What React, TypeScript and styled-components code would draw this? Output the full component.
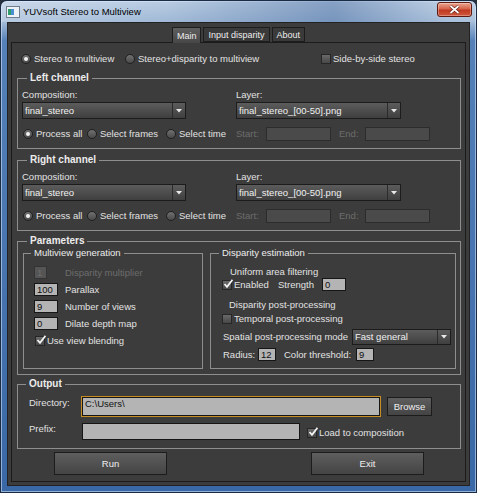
import React from 'react'
import styled, { createGlobalStyle } from 'styled-components'

const GlobalStyle = createGlobalStyle`
    html, body {
        margin: 0;
        padding: 0;
        background: #26313d;
    }
    body {
        font-family: "Liberation Sans", Arial, sans-serif;
        font-size: 9.5px;
        line-height: 12px;
        color: #e2e2e2;
    }
`

const Window = styled.div`
    box-sizing: border-box;
    width: 477px;
    height: 493px;
    display: flex;
    flex-direction: column;
    padding: 0 6px 6px;
    border: 1px solid #1a2c44;
    border-radius: 7px 7px 0 0;
    background: linear-gradient(to bottom, #b9cce2 0, #9fb8d6 22px, #5581b8 40px, #3a68a6 100%);
    box-shadow: inset 0 0 0 1px rgba(220, 235, 255, 0.55);
`

const TitleBar = styled.div`
    height: 21px;
    margin: 0 -6px;
    padding: 0 4px 0 5px;
    display: flex;
    align-items: center;
    gap: 3px;
    border-radius: 6px 6px 0 0;
    background: linear-gradient(to right, rgba(255,255,255,0.25) 0, rgba(255,255,255,0) 35%, rgba(40,80,140,0.35) 70%, rgba(255,255,255,0.1) 95%);
    color: #000;
`

const CloseButton = styled.div`
    box-sizing: border-box;
    width: 35px;
    height: 15px;
    margin-left: auto;
    align-self: flex-start;
    margin-top: 1px;
    display: flex;
    align-items: center;
    justify-content: center;
    border: 1px solid #5e1a10;
    border-radius: 3px;
    background: linear-gradient(#eaa590, #d6644a 45%, #c03a22 55%, #d0583c);
    box-shadow: inset 0 0 0 1px rgba(255,255,255,0.3);
`

const Client = styled.div`
    flex: 1;
    display: flex;
    flex-direction: column;
    background: #3c3c3c;
    border: 1px solid #222;
    padding: 4px 3px 3px;
`

const TabBar = styled.div`
    height: 15px;
    display: flex;
    justify-content: center;
    gap: 2px;
    align-items: flex-start;
`

const Tab = styled.div<{ $active?: boolean }>`
    box-sizing: border-box;
    height: ${p => p.$active ? 16 : 15}px;
    padding: 0 4px;
    display: flex;
    align-items: center;
    font-size: 9px;
    border: 1px solid #1d1d1d;
    border-bottom: ${p => p.$active ? 'none' : '1px solid #1d1d1d'};
    background: ${p => p.$active ? 'linear-gradient(#5e5e5e, #474747)' : '#3a3a3a'};
    color: #eee;
    position: relative;
    z-index: 1;
`

const Pane = styled.div`
    flex: 1;
    display: flex;
    flex-direction: column;
    border: 1px solid #1b1b1b;
    padding: 0 4px 0 5px;
`

const TopRow = styled.div`
    display: flex;
    align-items: center;
    height: 14px;
    margin: 9px 0 0 4px;
`

const Option = styled.label<{ $w?: number; $gap?: number }>`
    display: inline-flex;
    align-items: center;
    gap: ${p => p.$gap ?? 3}px;
    width: ${p => p.$w ? p.$w + 'px' : 'auto'};
    flex-shrink: 0;
    white-space: nowrap;
`

const Radio = styled.span<{ $on?: boolean }>`
    box-sizing: border-box;
    width: 10px;
    height: 10px;
    border-radius: 50%;
    border: 1px solid #202020;
    background: linear-gradient(#707070, #4a4a4a);
    display: inline-flex;
    align-items: center;
    justify-content: center;
    flex-shrink: 0;

    &::after {
        content: "";
        display: ${p => p.$on ? 'block' : 'none'};
        width: 4px;
        height: 4px;
        border-radius: 50%;
        background: #f2f2f2;
    }
`

const Box = styled.span`
    box-sizing: border-box;
    width: 10px;
    height: 10px;
    border: 1px solid #262626;
    background: linear-gradient(#6a6a6a, #474747);
    display: inline-flex;
    align-items: center;
    justify-content: center;
    flex-shrink: 0;
    overflow: visible;
`

const Group = styled.fieldset<{ $h: number; $mt: number; $pad?: string }>`
    box-sizing: border-box;
    margin: ${p => p.$mt}px 0 0;
    height: ${p => p.$h}px;
    min-width: 0;
    border: 1px solid #8e8e8e;
    padding: ${p => p.$pad ?? '0 4px'};
`

const Legend = styled.legend<{ $bold?: boolean; $ml?: number }>`
    padding: 0 3px;
    margin-left: ${p => p.$ml ?? 5}px;
    line-height: 12px;
    font-weight: ${p => p.$bold ? 700 : 400};
    font-size: ${p => p.$bold ? '10px' : '9.5px'};
    color: #ececec;
`

const ChannelBody = styled.div`
    display: grid;
    grid-template-columns: 214px 1fr;
    grid-template-rows: 13px 25px 14px;
    grid-auto-flow: column;
    padding-top: 5px;
`

const Combo = styled.div<{ $w: number; $h?: number }>`
    box-sizing: border-box;
    width: ${p => p.$w}px;
    height: ${p => p.$h ?? 17}px;
    display: flex;
    border: 1px solid #1c1c1c;
    background: linear-gradient(#5c5c5c, #3f3f3f);
    color: #f0f0f0;
`

const ComboText = styled.span`
    flex: 1;
    display: flex;
    align-items: center;
    padding-left: 2px;
    white-space: nowrap;
`

const ComboArrow = styled.span`
    width: 12px;
    border-left: 1px solid #2b2b2b;
    display: flex;
    align-items: center;
    justify-content: center;
`

const Row = styled.div<{ $mt?: number; $h?: number; $ml?: number }>`
    display: flex;
    align-items: center;
    height: ${p => p.$h ?? 14}px;
    margin-top: ${p => p.$mt ?? 0}px;
    margin-left: ${p => p.$ml ?? 0}px;
`

const Text = styled.span<{ $w?: number; $muted?: boolean; $ml?: number }>`
    display: inline-block;
    width: ${p => p.$w ? p.$w + 'px' : 'auto'};
    margin-left: ${p => p.$ml ?? 0}px;
    color: ${p => p.$muted ? '#6c6c6c' : '#e2e2e2'};
    white-space: nowrap;
    flex-shrink: 0;
`

const Field = styled.div<{ $w: number; $h?: number; $off?: boolean; $focus?: boolean }>`
    box-sizing: border-box;
    width: ${p => p.$w}px;
    height: ${p => p.$h ?? 13}px;
    padding-left: 2px;
    display: flex;
    align-items: center;
    border: 1px solid ${p => p.$off ? '#2c2c2c' : '#161616'};
    background: ${p => p.$off ? '#4a4a4a' : '#b4b4b4'};
    color: ${p => p.$off ? '#6c6c6c' : '#111'};
    outline: ${p => p.$focus ? '1px solid #c68e24' : 'none'};
    flex-shrink: 0;
`

const InnerGrid = styled.div`
    display: grid;
    grid-template-columns: 180px 246px;
    column-gap: 7px;
`

const ViewGrid = styled.div`
    display: grid;
    grid-template-columns: 24px 1fr;
    grid-auto-rows: 13px;
    column-gap: 7px;
    row-gap: 4px;
    align-items: center;
    padding-top: 7px;
`

const Button = styled.div<{ $w: number; $h: number }>`
    box-sizing: border-box;
    width: ${p => p.$w}px;
    height: ${p => p.$h}px;
    display: flex;
    align-items: center;
    justify-content: center;
    border: 1px solid #1c1c1c;
    background: linear-gradient(#5e5e5e, #444);
    color: #eee;
    flex-shrink: 0;
`

const ButtonRow = styled.div`
    display: flex;
    gap: 144px;
    margin: 3px 0 0 37px;
`

const Tick = () => (
    <svg width="10" height="10" viewBox="0 0 10 10" style={{ marginTop: -2, marginRight: -2 }}>
        <path d="M1.5 5 L4 7.8 L9.5 0.8" fill="none" stroke="#f4f4f4" strokeWidth="1.8" />
    </svg>
)

const Arrow = () => (
    <svg width="6" height="4" viewBox="0 0 6 4">
        <path d="M0 0 H6 L3 3.5 Z" fill="#e8e8e8" />
    </svg>
)

const AppIcon = () => (
    <svg width="14" height="12" viewBox="0 0 14 12">
        <rect x="0.5" y="0.5" width="13" height="11" fill="#eef2f6" stroke="#6f7f90" />
        <rect x="2" y="3" width="3" height="6" fill="#2f9e6a" />
        <rect x="5" y="3" width="3" height="6" fill="#4a8fd0" />
    </svg>
)

const CloseX = () => (
    <svg width="11" height="9" viewBox="0 0 11 9">
        <path d="M1.5 1 L9.5 8 M9.5 1 L1.5 8" stroke="#5a1a10" strokeWidth="3" />
        <path d="M1.5 1 L9.5 8 M9.5 1 L1.5 8" stroke="#fff" strokeWidth="1.7" />
    </svg>
)

type Check = { label: string; on?: boolean; w?: number; muted?: boolean }

const RadioOpt = ({ label, on, w }: Check) => (
    <Option $w={w}><Radio $on={on} /><span>{label}</span></Option>
)

const CheckOpt = ({ label, on, w }: Check) => (
    <Option $w={w} $gap={2}><Box>{on && <Tick />}</Box><span>{label}</span></Option>
)

const Channel = ({ title, mt }: { title: string; mt: number }) => (
    <Group $h={77} $mt={mt}>
        <Legend $bold>{title}</Legend>
        <ChannelBody>
            <Text>Composition:</Text>
            <Combo $w={164} style={{ alignSelf: 'start' }}>
                <ComboText>final_stereo</ComboText>
                <ComboArrow><Arrow /></ComboArrow>
            </Combo>
            <Row $ml={1}>
                <RadioOpt label="Process all" on w={64} />
                <RadioOpt label="Select frames" w={79} />
                <RadioOpt label="Select time" />
            </Row>
            <Text>Layer:</Text>
            <Combo $w={165} style={{ alignSelf: 'start' }}>
                <ComboText>final_stereo_[00-50].png</ComboText>
                <ComboArrow><Arrow /></ComboArrow>
            </Combo>
            <Row>
                <Text $w={30} $muted>Start:</Text>
                <Field $w={65} $h={14} $off />
                <Text $w={26} $ml={8} $muted>End:</Text>
                <Field $w={65} $h={14} $off />
            </Row>
        </ChannelBody>
    </Group>
)

const App = () => {
    const views = [
        { value: '1', label: 'Disparity multiplier', off: true },
        { value: '100', label: 'Parallax' },
        { value: '9', label: 'Number of views' },
        { value: '0', label: 'Dilate depth map' },
    ]

    return (
        <>
            <GlobalStyle />
            <Window>
                <TitleBar>
                    <AppIcon />
                    <span>YUVsoft Stereo to Multiview</span>
                    <CloseButton><CloseX /></CloseButton>
                </TitleBar>
                <Client>
                    <TabBar>
                        <Tab $active>Main</Tab>
                        <Tab>Input disparity</Tab>
                        <Tab>About</Tab>
                    </TabBar>
                    <Pane>
                        <TopRow>
                            <RadioOpt label="Stereo to multiview" on w={104} />
                            <RadioOpt label="Stereo+disparity to multiview" w={196} />
                            <CheckOpt label="Side-by-side stereo" />
                        </TopRow>

                        <Channel title="Left channel" mt={6} />
                        <Channel title="Right channel" mt={5} />

                        <Group $h={140} $mt={4} $pad="0 4px 0 5px">
                            <Legend $bold $ml={4}>Parameters</Legend>
                            <InnerGrid>
                                <Group $h={122} $mt={0} $pad="0 10px">
                                    <Legend $ml={-3}>Multiview generation</Legend>
                                    <ViewGrid>
                                        {views.map((v, i) => (
                                            <React.Fragment key={i}>
                                                <Field $w={v.off ? 13 : 24} $off={v.off} style={v.off ? { background: '#555', borderColor: '#333' } : undefined}>{v.value}</Field>
                                                <Text $muted={v.off}>{v.label}</Text>
                                            </React.Fragment>
                                        ))}
                                    </ViewGrid>
                                    <Row $mt={4} $h={13} $ml={1}>
                                        <CheckOpt label="Use view blending" on />
                                    </Row>
                                </Group>
                                <Group $h={122} $mt={0} $pad="0 4px 0 11px">
                                    <Legend $ml={-3}>Disparity estimation</Legend>
                                    <Row $mt={7} $h={12} $ml={8}>
                                        <Text>Uniform area filtering</Text>
                                    </Row>
                                    <Row $h={13}>
                                        <CheckOpt label="Enabled" on w={56} />
                                        <Text $w={44}>Strength</Text>
                                        <Field $w={24}>0</Field>
                                    </Row>
                                    <Row $mt={8} $h={12} $ml={7}>
                                        <Text>Disparity post-processing</Text>
                                    </Row>
                                    <Row $mt={2} $h={12}>
                                        <CheckOpt label="Temporal post-processing" />
                                    </Row>
                                    <Row $mt={4} $h={16}>
                                        <Text $w={129} $ml={1}>Spatial post-processing mode</Text>
                                        <Combo $w={99} $h={16}>
                                            <ComboText>Fast general</ComboText>
                                            <ComboArrow><Arrow /></ComboArrow>
                                        </Combo>
                                    </Row>
                                    <Row $mt={3} $h={13}>
                                        <Text $w={35} $ml={1}>Radius:</Text>
                                        <Field $w={18}>12</Field>
                                        <Text $w={72} $ml={8}>Color threshold:</Text>
                                        <Field $w={18}>9</Field>
                                    </Row>
                                </Group>
                            </InnerGrid>
                        </Group>

                        <Group $h={71} $mt={3} $pad="6px 4px 0">
                            <Legend $bold $ml={4}>Output</Legend>
                            <Row $h={21} style={{ alignItems: 'flex-start' }}>
                                <Text $w={53} $ml={7} style={{ paddingTop: 1 }}>Directory:</Text>
                                <Field $w={298} $h={19} $focus style={{ marginTop: 1, alignItems: 'flex-start' }}>C:\Users\</Field>
                                <Button $w={45} $h={19} style={{ marginLeft: 7, marginTop: 1 }}>Browse</Button>
                            </Row>
                            <Row $mt={6} $h={17} style={{ alignItems: 'flex-start' }}>
                                <Text $w={53} $ml={7}>Prefix:</Text>
                                <Field $w={218} $h={17} />
                                <Option style={{ marginLeft: 7, marginTop: 4 }} $gap={2}>
                                    <Box><Tick /></Box><span>Load to composition</span>
                                </Option>
                            </Row>
                        </Group>

                        <ButtonRow>
                            <Button $w={113} $h={23}>Run</Button>
                            <Button $w={113} $h={23}>Exit</Button>
                        </ButtonRow>
                    </Pane>
                </Client>
            </Window>
        </>
    )
}

export default App
